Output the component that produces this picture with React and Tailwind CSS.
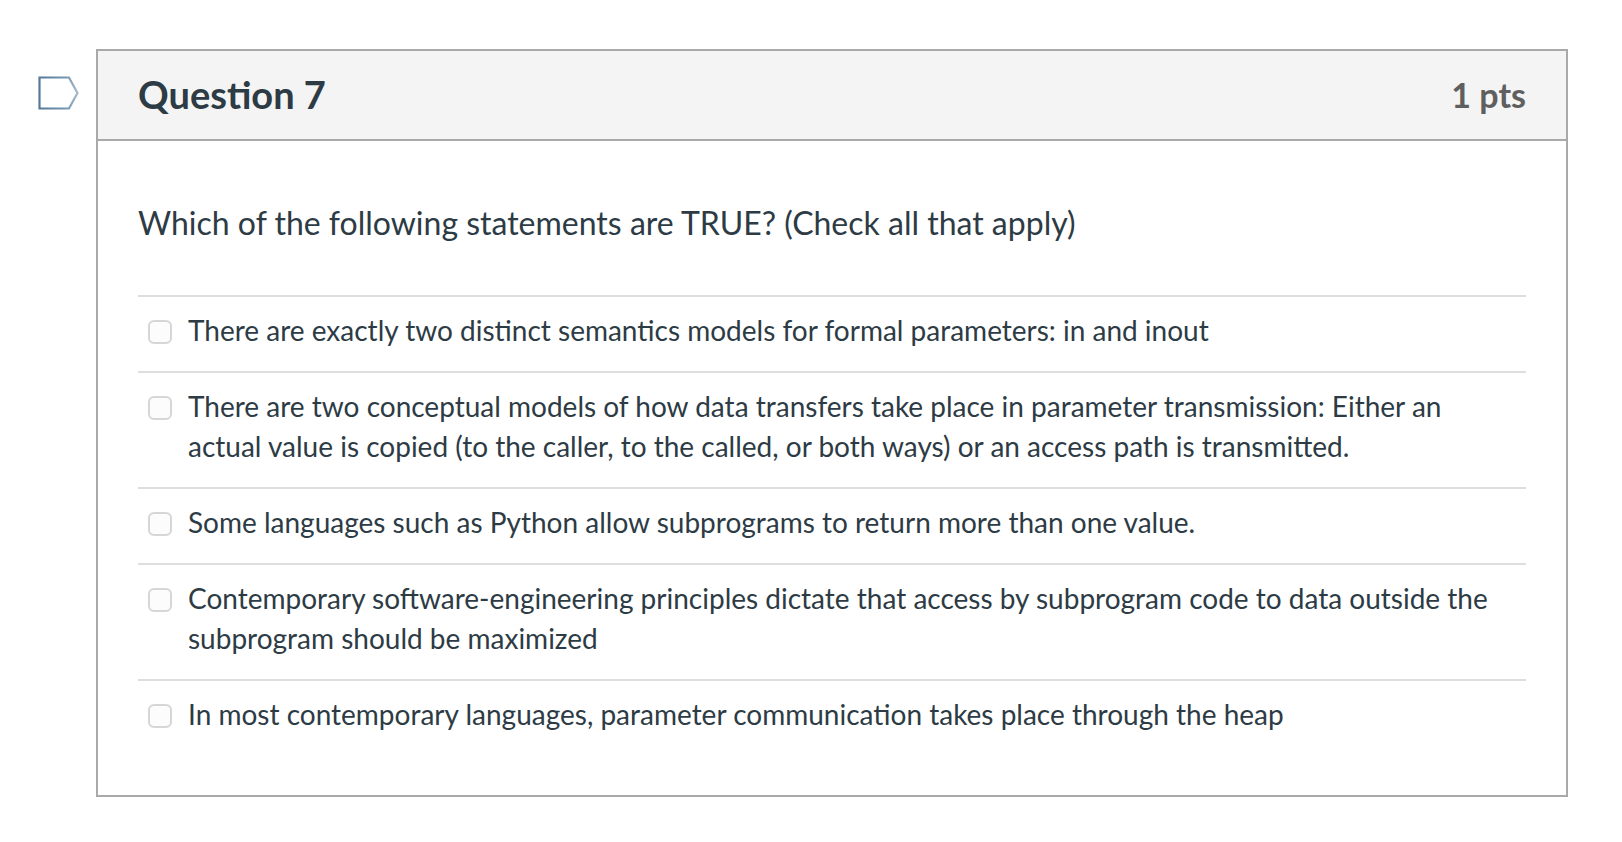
import React from 'react';

const ANSWERS = [
  'There are exactly two distinct semantics models for formal parameters: in and inout',
  'There are two conceptual models of how data transfers take place in parameter transmission: Either an actual value is copied (to the caller, to the called, or both ways) or an access path is transmitted.',
  'Some languages such as Python allow subprograms to return more than one value.',
  'Contemporary software-engineering principles dictate that access by subprogram code to data outside the subprogram should be maximized',
  'In most contemporary languages, parameter communication takes place through the heap',
];

const App = () => {
  return (
    <div className="min-h-screen bg-white font-['Lato',sans-serif] text-[#2d3b45] pt-[49px] pl-[38px] pr-[54px] flex items-start">
      {/* Question flag */}
      <svg width="42" height="34" viewBox="0 0 42 34" className="mt-[27px] mr-[16px] shrink-0" fill="none">
        <defs>
          <linearGradient id="flag" x1="0" y1="0" x2="1" y2="0">
            <stop offset="0" stopColor="#55799a" />
            <stop offset="0.7" stopColor="#7596b0" />
            <stop offset="1" stopColor="#a3b9ca" />
          </linearGradient>
        </defs>
        <path d="M1.5 1.5H31L39.5 17L31 32.5H1.5Z" stroke="url(#flag)" strokeWidth="2.2" />
      </svg>

      <div className="flex-1 border-2 border-[#a9a9a9]">
        {/* Header */}
        <div className="h-[90px] bg-[#f4f4f4] border-b-2 border-[#a9a9a9] px-[40px] flex items-center justify-between">
          <h2 className="text-[38px] font-bold leading-none pb-[2px]">Question 7</h2>
          <span className="text-[34px] font-bold text-[#5f5f5f] leading-none">1 pts</span>
        </div>

        {/* Body */}
        <div className="px-[40px] pt-[60px] pb-[40px]">
          <p className="text-[32px] leading-[44px] mb-[50px]">Which of the following statements are TRUE? (Check all that apply)</p>
          <div className="flex flex-col">
            {ANSWERS.map((text) => (
              <div key={text} className="border-t-2 border-[#dedede] pt-[13px] pb-[21px] flex items-start">
                <span className="mt-[10px] ml-[10px] mr-[16px] w-[24px] h-[24px] shrink-0 rounded-[6px] border-2 border-[#d6d6d6] bg-[#fcfcfc]"></span>
                <p className="text-[28px] leading-[40px] pr-[20px]">{text}</p>
              </div>
            ))}
          </div>
        </div>
      </div>
    </div>
  );
};

export default App;
